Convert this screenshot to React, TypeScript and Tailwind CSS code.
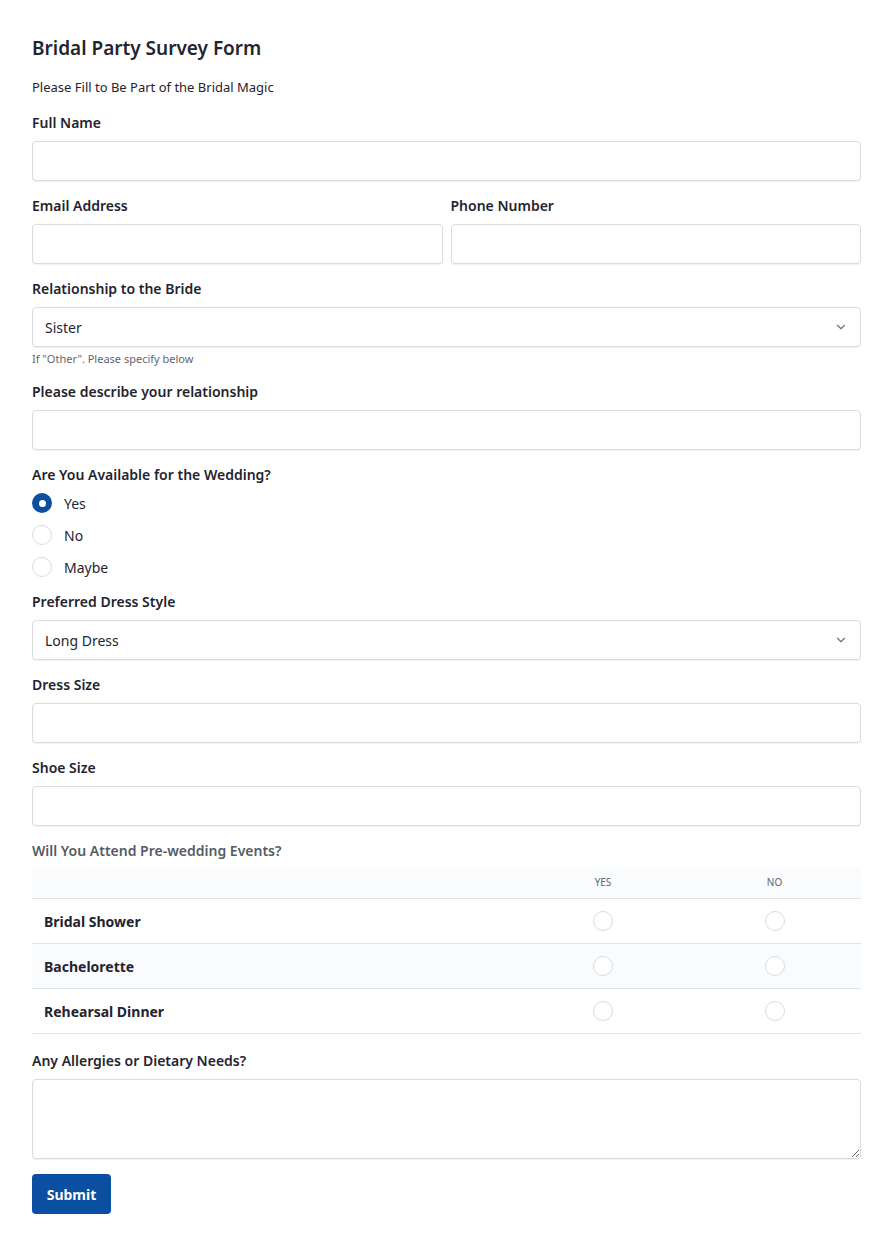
import React from "react";

const font = { fontFamily: '"Segoe UI","Noto Sans",sans-serif' };

function Label({ children, gray }: { children: React.ReactNode; gray?: boolean }) {
  return (
    <div className={`h-5 text-[14px] leading-5 font-semibold mb-2 ${gray ? "text-[#545b67]" : "text-[#1f2430]"}`}>{children}</div>
  );
}
const inputCls = "block w-full h-10 rounded-[4px] border border-[#d8dbe0] bg-white shadow-[0_1px_1px_rgba(0,0,0,0.06)]";

function Chevron() {
  return (
    <svg width="14" height="14" viewBox="0 0 24 24" fill="none" stroke="#6b7280" strokeWidth="2" strokeLinecap="round" strokeLinejoin="round"><path d="M6 9l6 6 6-6" /></svg>
  );
}
function Select({ value }: { value: string }) {
  return (
    <div className={`${inputCls} flex items-center justify-between px-3 text-[14px] text-[#1f2430]`}>
      <span>{value}</span>
      <Chevron />
    </div>
  );
}
function Radio({ checked }: { checked?: boolean }) {
  return checked ? (
    <span className="w-5 h-5 rounded-full bg-[#0b4fa0] flex items-center justify-center"><span className="w-[7px] h-[7px] rounded-full bg-white" /></span>
  ) : (
    <span className="w-5 h-5 rounded-full border border-[#d8dbe0] bg-white" />
  );
}

export default function App() {
  const rows = ["Bridal Shower", "Bachelorette", "Rehearsal Dinner"];
  return (
    <div style={font} className="bg-white pl-8 pr-[23px] pt-[35px] pb-8 text-[#1f2430]">
      <h1 className="text-[19px] leading-[26px] font-semibold">Bridal Party Survey Form</h1>
      <p className="text-[13px] leading-5 mt-[16px] mb-[16px]">Please Fill to Be Part of the Bridal Magic</p>

      <div className="mb-[15px]"><Label>Full Name</Label><div className={inputCls} /></div>
      <div className="mb-[15px] grid grid-cols-2 gap-2">
        <div><Label>Email Address</Label><div className={inputCls} /></div>
        <div><Label>Phone Number</Label><div className={inputCls} /></div>
      </div>
      <div className="mb-[15px]">
        <Label>Relationship to the Bride</Label>
        <Select value="Sister" />
        <div className="text-[11px] leading-4 text-[#5f6672] mt-1">If "Other". Please specify below</div>
      </div>
      <div className="mb-[15px]"><Label>Please describe your relationship</Label><div className={inputCls} /></div>
      <div className="mb-[15px]">
        <Label>Are You Available for the Wedding?</Label>
        <div className="flex flex-col gap-3">
          {["Yes", "No", "Maybe"].map((o, i) => (
            <div key={o} className="flex items-center gap-3 h-5 text-[14px]"><Radio checked={i === 0} /><span>{o}</span></div>
          ))}
        </div>
      </div>
      <div className="mb-[15px]"><Label>Preferred Dress Style</Label><Select value="Long Dress" /></div>
      <div className="mb-[15px]"><Label>Dress Size</Label><div className={inputCls} /></div>
      <div className="mb-[15px]"><Label>Shoe Size</Label><div className={inputCls} /></div>
      <div className="mb-[17px]">
        <Label gray>Will You Attend Pre-wedding Events?</Label>
        <div className="mt-[-2px]">
          <div className="grid grid-cols-[486px_170px_1fr] h-8 items-center bg-[#fafbfd] border-b border-[#dfe2e6] text-[10px] text-[#5f6672]">
            <span /><span className="text-center">YES</span><span className="text-center">NO</span>
          </div>
          {rows.map((r, i) => (
            <div key={r} className={`grid grid-cols-[486px_170px_1fr] h-[45px] items-center border-b border-[#dfe2e6] ${i === 1 ? "bg-[#fafbfd]" : "bg-white"}`}>
              <span className="pl-3 text-[14px] font-bold">{r}</span>
              <span className="flex justify-center"><Radio /></span>
              <span className="flex justify-center"><Radio /></span>
            </div>
          ))}
        </div>
      </div>
      <div className="mb-[15px]">
        <Label>Any Allergies or Dietary Needs?</Label>
        <textarea className="block w-full h-20 rounded-[4px] border border-[#d8dbe0] shadow-[0_1px_1px_rgba(0,0,0,0.06)]" />
      </div>
      <button className="h-10 w-[79px] rounded-[4px] bg-[#0b4fa0] text-white text-[14px] font-bold">Submit</button>
    </div>
  );
}
